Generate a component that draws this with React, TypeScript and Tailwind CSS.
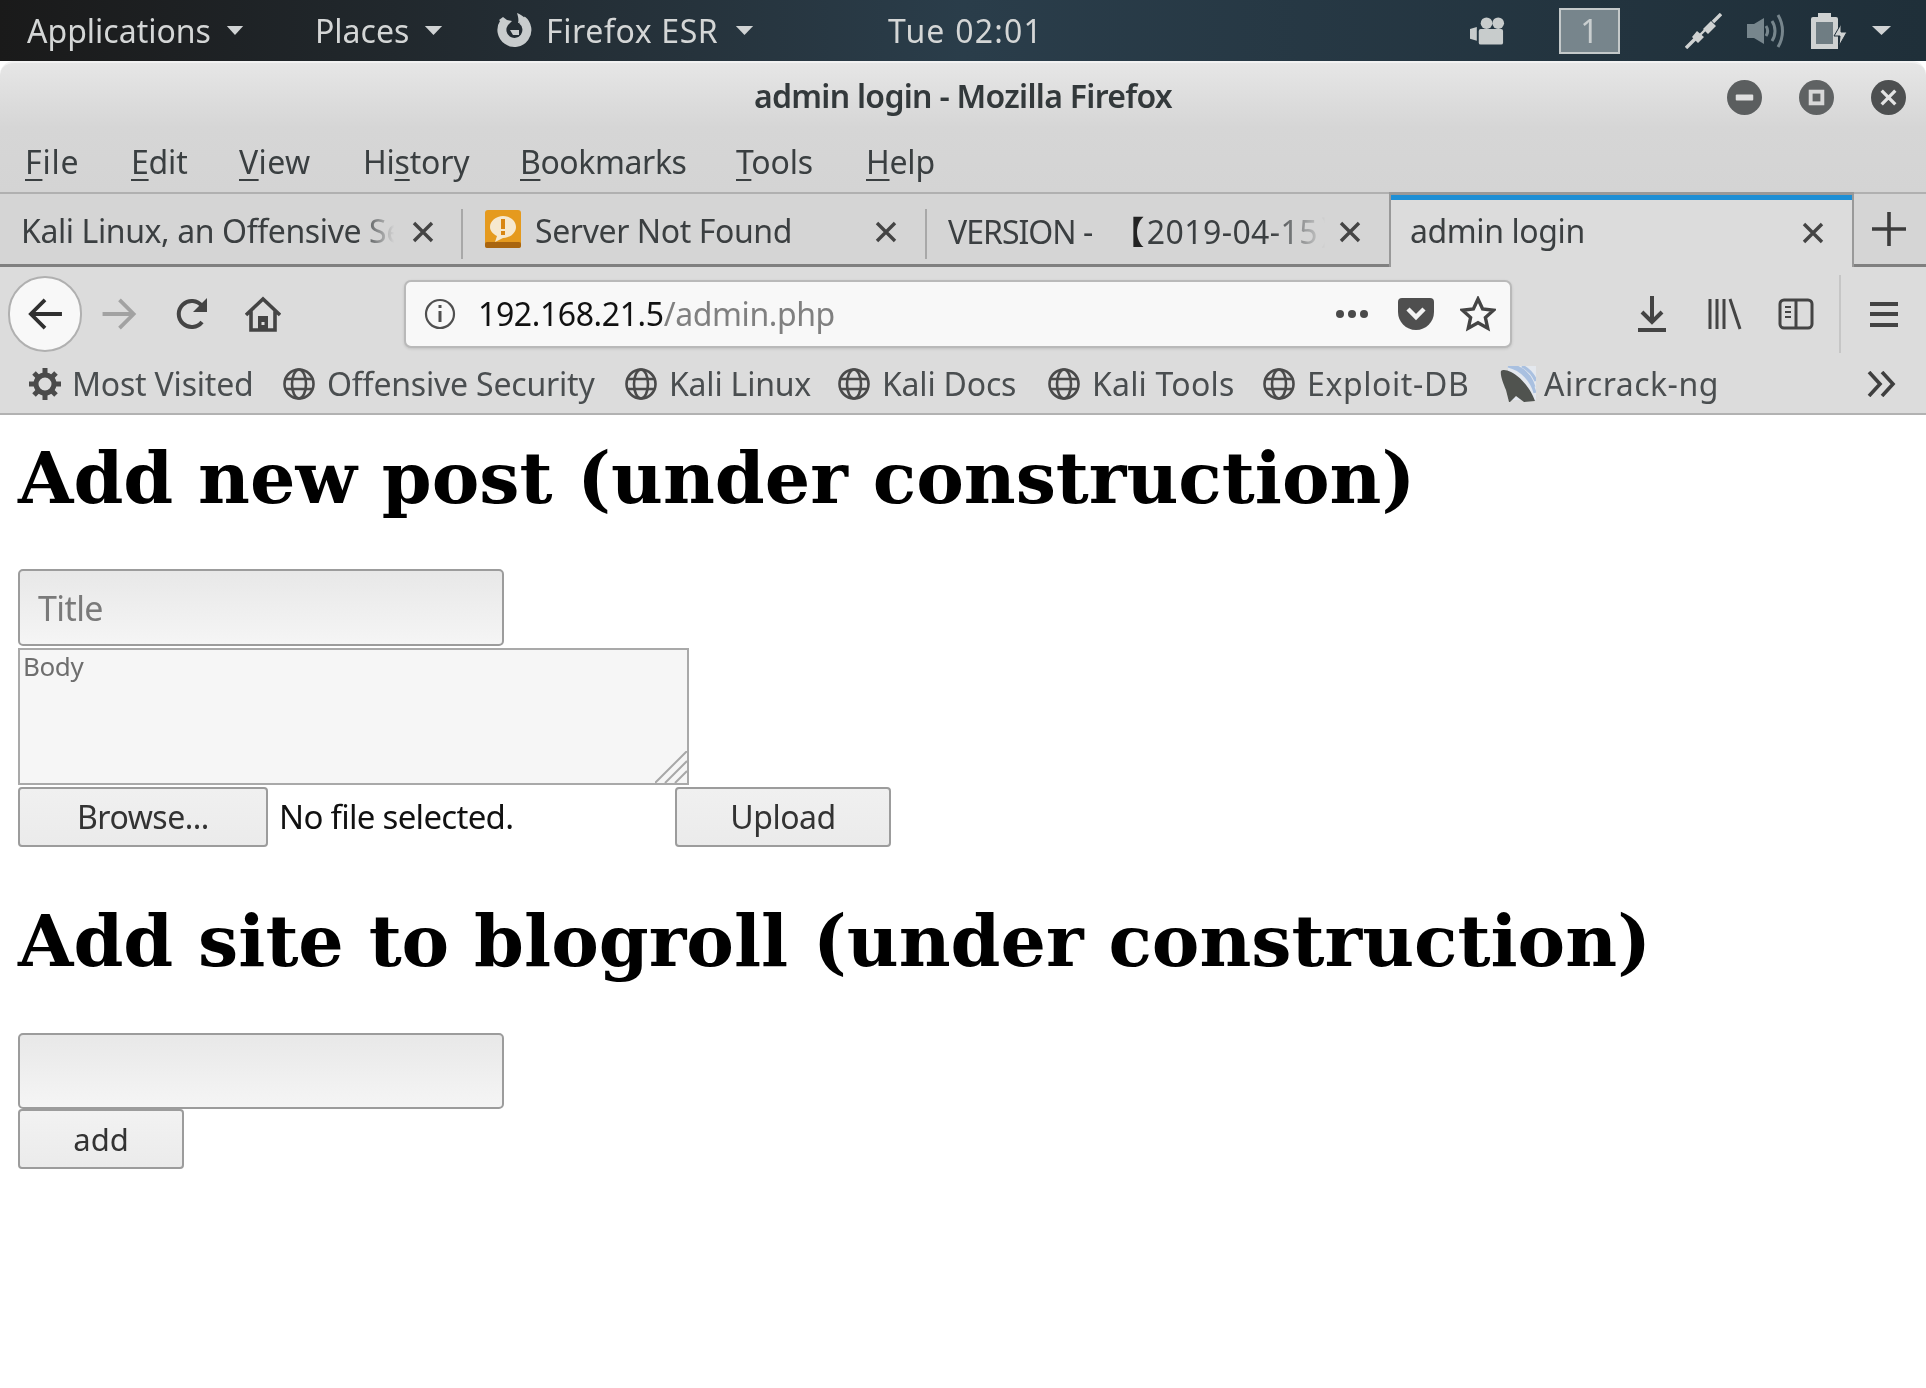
const ui = { fontFamily: '"Noto Sans", sans-serif' };

function Caret({ className }: { className: string }) {
  return (
    <svg viewBox="0 0 22 12" preserveAspectRatio="none" className={className}>
      <path d="M1 1h20L11 11z" fill="#d0d3d4" />
    </svg>
  );
}

function Close() {
  return (
    <svg viewBox="0 0 24 24" className="w-[24px] h-[24px] shrink-0">
      <path d="M3 3l18 18M21 3L3 21" stroke="#444" strokeWidth="3.4" fill="none" />
    </svg>
  );
}

function Mnemonic({ pre = "", u, post, className }: { pre?: string; u: string; post: string; className: string }) {
  return (
    <span className={className}>
      {pre}
      <span className="underline decoration-2 underline-offset-[5px]">{u}</span>
      {post}
    </span>
  );
}

function Globe() {
  return (
    <svg viewBox="0 0 34 34" className="w-[34px] h-[34px] shrink-0" fill="none" stroke="#4a4a4a" strokeWidth="2.6">
      <circle cx="17" cy="17" r="14.5" />
      <ellipse cx="17" cy="17" rx="7" ry="14.5" />
      <path d="M3 12h28M3 22h28" />
    </svg>
  );
}

function Tab({ children, close, width, sep }: { children: React.ReactNode; close: string; width: string; sep?: boolean }) {
  return (
    <div className={`relative h-full pt-[3px] flex items-center ${width}`}>
      {children}
      <span className={`absolute top-[26px] ${close}`}>
        <Close />
      </span>
      {sep && <span className="absolute right-0 top-[15px] h-[50px] w-[2px] bg-[#a8a8a8]" />}
    </div>
  );
}

const bookmarks = [
  { name: "Offensive Security", w: "w-[342px]", t: "" },
  { name: "Kali Linux", w: "w-[213px]", t: "" },
  { name: "Kali Docs", w: "w-[210px]", t: "" },
  { name: "Kali Tools", w: "w-[215px]", t: "tracking-[0.2px]" },
  { name: "Exploit-DB", w: "w-[238px]", t: "tracking-[0.6px]" },
];

export default function App() {
  return (
    <div className="w-[1926px] h-[1388px] bg-white overflow-hidden blur-[0.5px]" style={ui}>
      {/* gnome panel */}
      <div className="h-[61px] flex items-center bg-gradient-to-r from-[#1a1a1a] via-[#2a3d4a] to-[#1f2f39] text-[#d4d6d6] text-[32px]">
        <span className="ml-[27px] w-[199px]">Applications</span>
        <Caret className="w-[18px] h-[11px]" />
        <span className="ml-[71px] w-[109px]">Places</span>
        <Caret className="w-[19px] h-[11px]" />
        <svg viewBox="0 0 36 36" className="ml-[54px] w-[36px] h-[36px]" fill="none">
          <path d="M25 7A12.500 12.500 0 1 1 7 10" stroke="#c8cccd" strokeWidth="9" />
          <path d="M2 7l4-3 4 3 5 1-6 6zM20 0c5 2 9 5 10 9l-9 1c1-3 0-7-1-10z" fill="#c8cccd" />
          <path d="M13 17h9v5h-6z" fill="#c8cccd" />
        </svg>
        <span className="ml-[13px] w-[189px] tracking-[0.6px]">Firefox ESR</span>
        <Caret className="w-[19px] h-[11px]" />
        <span className="ml-[134px] w-[157px] tracking-[1.2px]">Tue 02:01</span>
        <svg viewBox="0 0 36 28" className="ml-[425px] w-[35px] h-[28px]">
          <path d="M0 12l7-2v14l-7-2z" fill="#c8cccc" />
          <circle cx="17" cy="6" r="6" fill="#c8cccc" />
          <circle cx="29" cy="6" r="6" fill="#c8cccc" />
          <rect x="9" y="12" width="25" height="16" rx="2" fill="#c8cccc" />
        </svg>
        <div className="ml-[54px] w-[61px] h-[46px] border-2 border-[#c4c9ca] bg-[#77858c] flex items-center justify-center text-[#c9cecf] text-[32px]">1</div>
        <svg viewBox="0 0 37 36" className="ml-[65px] w-[37px] h-[36px]">
          <path d="M1 35l10-10M28 9l8-8" stroke="#cfd2d2" strokeWidth="3.4" />
          <path d="M7 24l5-6 7 6-6 6zM18 16l8-8 5 5-8 8z" fill="#cfd2d2" />
          <path d="M13 24l7-7" stroke="#cfd2d2" strokeWidth="2.4" />
        </svg>
        <svg viewBox="0 0 38 36" className="ml-[25px] w-[38px] h-[36px]" fill="none">
          <path d="M0 11h7l10-6v26l-10-6H0z" fill="#77868d" />
          <path d="M19 13c2 3 2 7 0 10M25 8c4 6 4 14 0 20M31 2c6 10 6 22 0 32" stroke="#77868d" strokeWidth="3" />
        </svg>
        <svg viewBox="0 0 38 36" className="ml-[25px] w-[38px] h-[36px]">
          <rect x="8" y="0" width="13" height="4" fill="#cfd2d2" />
          <path d="M1 6a2 2 0 0 1 2-2h23a2 2 0 0 1 2 2v30H1z" fill="#cfd2d2" />
          <rect x="6" y="9" width="17" height="22" fill="#6f7d83" />
          <path d="M31 11l-7 12h6l-1 10 8-14h-6z" fill="#cfd2d2" stroke="#1f2f39" strokeWidth="1" />
        </svg>
        <Caret className="ml-[23px] w-[21px] h-[11px]" />
      </div>

      {/* firefox chrome */}
      <div className="relative h-[131px] rounded-t-[14px] border-t-2 border-[#f2f2f2] bg-gradient-to-b from-[#e6e6e6] via-[#d6d6d6] to-[#d4d4d4] text-[#2e3436]">
        <div className="h-[66px] flex items-center justify-center font-semibold text-[32px] tracking-[-0.7px] text-[#33393b]">admin login - Mozilla Firefox</div>
        <div className="absolute right-[20px] top-[17px] flex gap-[37px]">
          <svg viewBox="0 0 36 36" className="w-[35px] h-[35px]">
            <circle cx="18" cy="18" r="18" fill="#5b5e5f" />
            <rect x="9" y="15" width="18" height="6" rx="1" fill="#e0e0e0" />
          </svg>
          <svg viewBox="0 0 36 36" className="w-[35px] h-[35px]">
            <circle cx="18" cy="18" r="18" fill="#5f6263" />
            <rect x="10" y="10" width="16" height="16" fill="#d8d8d8" />
            <rect x="14" y="14" width="8" height="8" fill="#606364" />
          </svg>
          <svg viewBox="0 0 36 36" className="w-[35px] h-[35px]">
            <circle cx="18" cy="18" r="18" fill="#4d4f50" />
            <path d="M11 11l14 14M25 11L11 25" stroke="#e4e4e4" strokeWidth="3.4" />
          </svg>
        </div>
        <div className="h-[62px] pt-[4px] flex items-center text-[32px] tracking-[-0.2px] text-[#3a3f41]">
          <Mnemonic u="F" post="ile" className="ml-[25px] w-[106px] tracking-[0.8px]" />
          <Mnemonic u="E" post="dit" className="w-[108px]" />
          <Mnemonic u="V" post="iew" className="w-[124px] tracking-[0.4px]" />
          <Mnemonic pre="Hi" u="s" post="tory" className="w-[157px]" />
          <Mnemonic u="B" post="ookmarks" className="w-[216px] tracking-[-0.4px]" />
          <Mnemonic u="T" post="ools" className="w-[130px]" />
          <Mnemonic u="H" post="elp" className="w-[80px]" />
        </div>
      </div>

      {/* tabs */}
      <div className="h-[75px] flex bg-[#d5d5d5] border-t-2 border-b-[3px] border-t-[#b0b0b0] border-b-[#808080] text-[32px] tracking-[-0.4px] text-[#3b3f41]">
        <Tab width="w-[463px]" close="left-[411px]" sep>
          <span className="ml-[21px] w-[385px] overflow-hidden whitespace-nowrap [mask-image:linear-gradient(to_right,black_88%,transparent_97%)]">Kali Linux, an Offensive Security</span>
        </Tab>
        <Tab width="w-[464px]" close="left-[411px]" sep>
          <svg viewBox="0 0 36 38" className="-mt-[3px] ml-[22px] w-[36px] h-[38px]">
            <rect width="36" height="38" rx="3" fill="#e59a1e" />
            <rect y="32" width="36" height="6" rx="2" fill="#a9650f" />
            <path d="M18 6c7 0 13 5 13 11s-6 11-13 11l-8 4 2-6c-4-2-7-5-7-9 0-6 6-11 13-11z" fill="#f6e8cf" />
            <rect x="16" y="9" width="4" height="10" fill="#d98612" />
            <rect x="16" y="21" width="4" height="4" fill="#d98612" />
          </svg>
          <span className="ml-[14px]">Server Not Found</span>
        </Tab>
        <Tab width="w-[462px]" close="left-[411px]">
          <span className="ml-[21px] w-[385px] overflow-hidden whitespace-nowrap [mask-image:linear-gradient(to_right,black_84%,transparent_98%)]">
            <span className="tracking-[-1px]">VERSION -</span>
            <span className="ml-[20px] mr-[3px] font-bold text-[#222]" style={{ fontFamily: '"Noto Sans CJK SC", sans-serif' }}>【</span>
            <span className="tracking-[0.4px]">2019-04-15】</span>
          </span>
        </Tab>
        <div className="relative w-[465px] -mt-[2px] -mb-[3px] h-[75px] flex items-center bg-[#dcdcdc] border-x-2 border-t-[3px] border-[#999] before:absolute before:left-0 before:right-0 before:top-0 before:h-[5px] before:bg-[#1e8fd5]">
          <span className="ml-[19px]">admin login</span>
          <span className="absolute left-[410px] top-[26px]">
            <Close />
          </span>
        </div>
        <div className="flex-1 flex items-center justify-center pr-[2px]">
          <svg viewBox="0 0 34 34" className="w-[34px] h-[34px]">
            <path d="M17 0v34M0 17h34" stroke="#3c3c3c" strokeWidth="3.6" />
          </svg>
        </div>
      </div>

      {/* nav toolbar */}
      <div className="h-[78px] pt-[16px] flex items-center bg-[#dcdcdc]">
        <div className="relative ml-[8px] w-[74px] h-[76px] shrink-0 rounded-full bg-[#f8f8f8] border-2 border-[#b0b0b0] flex items-center justify-center">
          <svg viewBox="0 0 36 34" className="w-[36px] h-[32px]" fill="none" stroke="#303030" strokeWidth="4">
            <path d="M36 17H3M18 2L3 17l15 15" />
          </svg>
        </div>
        <svg viewBox="0 0 36 34" className="ml-[19px] w-[37px] h-[32px]" fill="none" stroke="#a2a2a2" strokeWidth="4">
          <path d="M0 17h33M18 2l15 15-15 15" />
        </svg>
        <svg viewBox="0 0 34 34" className="ml-[37px] w-[34px] h-[34px]" fill="none">
          <path d="M27 25a13 13 0 1 1 0-16" stroke="#444" strokeWidth="4" />
          <path d="M32 1v14H18z" fill="#444" />
        </svg>
        <svg viewBox="0 0 36 36" className="ml-[36px] w-[36px] h-[36px]" fill="none" stroke="#444" strokeWidth="3.6">
          <path d="M1 19L18 3l17 16M6 14v20h24V14" />
          <path d="M13 34V20h10v14z" fill="#444" stroke="none" />
          <rect x="16.500" y="26" width="3" height="3" fill="#ddd" stroke="none" />
        </svg>
        <div className="ml-[123px] w-[1108px] h-[68px] shrink-0 flex items-center rounded-[7px] bg-[#f8f8f8] border-2 border-[#b9b9b9] text-[32px] tracking-[-0.4px] shadow-[0_1px_3px_rgba(0,0,0,0.12)]">
          <svg viewBox="0 0 32 32" className="ml-[18px] w-[32px] h-[32px]" fill="none" stroke="#505050" strokeWidth="2.2">
            <circle cx="16" cy="16" r="14" />
            <path d="M16 13v11" strokeWidth="3" />
            <path d="M16 7v3" strokeWidth="3" />
          </svg>
          <span className="ml-[22px] text-[#111]">192.168.21.5</span>
          <span className="text-[#808080]">/admin.php</span>
          <span className="ml-auto flex gap-[4px]">
            <span className="w-[8px] h-[8px] rounded-full bg-[#4a4a4a]" />
            <span className="w-[8px] h-[8px] rounded-full bg-[#4a4a4a]" />
            <span className="w-[8px] h-[8px] rounded-full bg-[#4a4a4a]" />
          </span>
          <svg viewBox="0 0 36 32" className="ml-[30px] w-[36px] h-[32px]">
            <path d="M4 0h28a4 4 0 0 1 4 4v10C36 24 28 32 18 32S0 24 0 14V4a4 4 0 0 1 4-4z" fill="#4f4f4f" />
            <path d="M10 11l8 8 8-8" fill="none" stroke="#f2f2f2" strokeWidth="4.5" />
          </svg>
          <svg viewBox="0 0 36 36" className="ml-[26px] mr-[14px] w-[36px] h-[36px]" fill="none" stroke="#444" strokeWidth="3.4">
            <path d="M18 3l4.600 10 10.900 1.200-8.100 7.300 2.300 10.700L18 26.800l-9.700 5.400 2.300-10.700L2.500 14.200 13.400 13z" />
          </svg>
        </div>
        <svg viewBox="0 0 28 36" className="ml-[126px] w-[28px] h-[36px]" fill="none" stroke="#444" strokeWidth="4">
          <path d="M14 0v26M4 16l10 10 10-10" />
          <path d="M0 34h28" />
        </svg>
        <svg viewBox="0 0 35 32" className="ml-[41px] w-[35px] h-[32px]" fill="none" stroke="#444" strokeWidth="3">
          <path d="M3 1v30M10 1v30M17 1v30M23 1l10 30" />
        </svg>
        <svg viewBox="0 0 36 32" className="ml-[36px] w-[36px] h-[32px]" fill="none" stroke="#444" strokeWidth="3">
          <rect x="2" y="2" width="32" height="28" rx="4" />
          <path d="M18 2v28" />
          <path d="M7 9h6M7 14h6M7 19h6" strokeWidth="2" />
        </svg>
        <div className="ml-[25px] w-[2px] h-[78px] shrink-0 bg-[#c6c6c6]" />
        <div className="ml-[29px] w-[28px] h-[25px] flex flex-col justify-between">
          <span className="h-[4px] bg-[#444]" />
          <span className="h-[4px] bg-[#444]" />
          <span className="h-[4px] bg-[#444]" />
        </div>
      </div>

      {/* bookmarks */}
      <div className="h-[70px] pt-[10px] flex items-center bg-[#dcdcdc] border-b-2 border-[#b2b2b2] text-[32px] tracking-[-0.2px] text-[#4a4e50]">
        <svg viewBox="0 0 32 32" className="ml-[29px] w-[32px] h-[32px]" fill="none" stroke="#4a4a4a">
          <circle cx="16" cy="16" r="9" strokeWidth="5" />
          <path d="M16 0v7M16 25v7M0 16h7M25 16h7M5 5l5 5M22 22l5 5M27 5l-5 5M10 22l-5 5" strokeWidth="5" />
        </svg>
        <span className="ml-[11px] w-[210px]">Most Visited</span>
        {bookmarks.map((b) => (
          <div key={b.name} className={`flex items-center gap-[11px] shrink-0 ${b.w}`}>
            <Globe />
            <span className={`whitespace-nowrap ${b.t}`}>{b.name}</span>
          </div>
        ))}
        <svg viewBox="0 0 36 36" className="w-[36px] h-[36px]">
          <rect x="8" y="0" width="28" height="34" fill="#e4e8ee" />
          <path d="M14 0c10 3 17 11 20 21M22 0c6 3 11 8 14 15M8 0c14 3 24 15 27 27" stroke="#a9c0e0" strokeWidth="3" fill="none" />
          <path d="M1 5c2-2 6-1 10 1 10 5 20 17 24 29l-11 1-8-6-6 6H9L6 24C3 17 0 9 1 5z" fill="#50534f" />
        </svg>
        <span className="ml-[8px] whitespace-nowrap tracking-[0.5px]">Aircrack-ng</span>
        <svg viewBox="0 0 30 26" className="ml-auto mr-[29px] w-[30px] h-[26px]" fill="none" stroke="#3f3f3f" strokeWidth="3.6">
          <path d="M2 1l11 12L2 25M15 1l11 12-11 12" />
        </svg>
      </div>

      {/* page */}
      <div className="pl-[18px] text-black">
        <h1 className="h-[154px] pt-[23px] text-[71.4px] leading-[80px] font-bold whitespace-nowrap" style={{ fontFamily: '"DejaVu Serif", serif' }}>Add new post (under construction)</h1>
        <input
          placeholder="Title"
          className="block w-[486px] h-[77px] px-[18px] text-[34px] tracking-[-0.6px] rounded-[5px] border-2 border-[#9c9c9c] bg-gradient-to-b from-[#e8e8e8] to-[#f5f5f5] placeholder:text-[#7a7a7a] outline-none"
        />
        <div className="relative mt-[2px] w-[671px] h-[137px]">
          <textarea
            placeholder="Body"
            className="block w-full h-full resize-none py-0 px-[3px] text-[26px] leading-[32px] tracking-[-0.4px] border-2 border-[#a9a9a9] bg-[#f6f6f6] placeholder:text-[#6e6e6e] outline-none"
          />
          <svg viewBox="0 0 32 32" className="absolute right-[2px] bottom-[2px] w-[32px] h-[32px]" stroke="#a8a8a8" strokeWidth="2">
            <path d="M0 32L32 0M10 32L32 10M20 32L32 20" />
          </svg>
        </div>
        <div className="mt-[2px] h-[60px] flex items-center text-[32px] tracking-[-0.5px]">
          <button className="w-[250px] h-full rounded-[4px] border-2 border-[#9c9c9c] bg-gradient-to-b from-[#f0f0f0] to-[#ebebeb] text-[#333]">Browse...</button>
          <span className="ml-[11px] w-[396px] text-[33px] tracking-[-0.7px] text-[#111]">No file selected.</span>
          <button className="w-[216px] h-full rounded-[4px] border-2 border-[#9c9c9c] bg-gradient-to-b from-[#f0f0f0] to-[#ebebeb] text-[#333]">Upload</button>
        </div>
        <h1 className="h-[186px] pt-[54px] text-[71.4px] leading-[80px] font-bold whitespace-nowrap" style={{ fontFamily: '"DejaVu Serif", serif' }}>Add site to blogroll (under construction)</h1>
        <input className="block w-[486px] h-[76px] rounded-[5px] border-2 border-[#9c9c9c] bg-gradient-to-b from-[#e8e8e8] to-[#f5f5f5] outline-none" />
        <button className="block w-[166px] h-[60px] rounded-[4px] border-2 border-[#9c9c9c] bg-gradient-to-b from-[#f2f2f2] to-[#ebebeb] text-[31px] text-[#333]">add</button>
      </div>
    </div>
  );
}
